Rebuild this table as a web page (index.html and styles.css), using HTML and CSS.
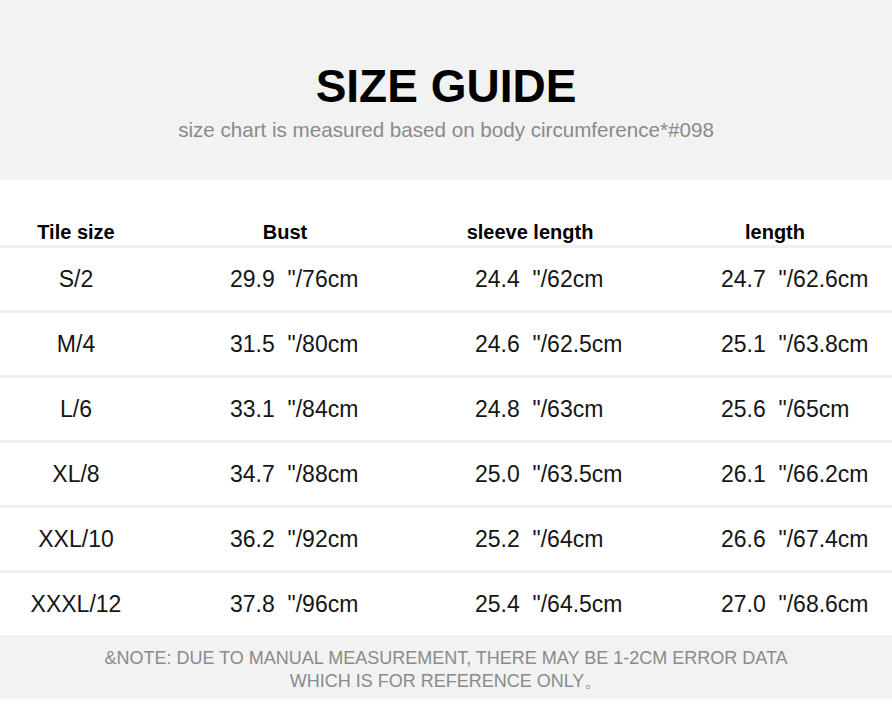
FILE: index.html
```html
<!DOCTYPE html>
<html lang="en">
<head>
<meta charset="utf-8">
<title>Size Guide</title>
<link rel="stylesheet" href="styles.css">
</head>
<body>
<header class="hero">
  <h1 class="title">SIZE GUIDE</h1>
  <p class="subtitle">size chart is measured based on body circumference*#098</p>
</header>
<section class="chart">
  <div class="row head">
    <div class="c c1">Tile size</div>
    <div class="c c2">Bust</div>
    <div class="c c3">sleeve length</div>
    <div class="c c4">length</div>
  </div>
  <div class="row">
    <div class="c c1">S/2</div>
    <div class="c c2">29.9&nbsp; "/76cm</div>
    <div class="c c3">24.4&nbsp; "/62cm</div>
    <div class="c c4">24.7&nbsp; "/62.6cm</div>
  </div>
  <div class="row">
    <div class="c c1">M/4</div>
    <div class="c c2">31.5&nbsp; "/80cm</div>
    <div class="c c3">24.6&nbsp; "/62.5cm</div>
    <div class="c c4">25.1&nbsp; "/63.8cm</div>
  </div>
  <div class="row">
    <div class="c c1">L/6</div>
    <div class="c c2">33.1&nbsp; "/84cm</div>
    <div class="c c3">24.8&nbsp; "/63cm</div>
    <div class="c c4">25.6&nbsp; "/65cm</div>
  </div>
  <div class="row">
    <div class="c c1">XL/8</div>
    <div class="c c2">34.7&nbsp; "/88cm</div>
    <div class="c c3">25.0&nbsp; "/63.5cm</div>
    <div class="c c4">26.1&nbsp; "/66.2cm</div>
  </div>
  <div class="row">
    <div class="c c1">XXL/10</div>
    <div class="c c2">36.2&nbsp; "/92cm</div>
    <div class="c c3">25.2&nbsp; "/64cm</div>
    <div class="c c4">26.6&nbsp; "/67.4cm</div>
  </div>
  <div class="row last">
    <div class="c c1">XXXL/12</div>
    <div class="c c2">37.8&nbsp; "/96cm</div>
    <div class="c c3">25.4&nbsp; "/64.5cm</div>
    <div class="c c4">27.0&nbsp; "/68.6cm</div>
  </div>
</section>
<footer class="note">
  <p>&amp;NOTE: DUE TO MANUAL MEASUREMENT, THERE MAY BE 1-2CM ERROR DATA<br>WHICH IS FOR REFERENCE ONLY。</p>
</footer>
</body>
</html>
```
FILE: styles.css
```css
html, body {
  margin: 0;
  padding: 0;
  background: #ffffff;
}
body {
  font-family: "Liberation Sans", Arial, sans-serif;
  color: #111111;
  width: 892px;
}
.hero {
  background: #f2f2f2;
  height: 180px;
  box-sizing: border-box;
  padding-top: 63px;
  text-align: center;
}
.title {
  margin: 0;
  font-size: 46px;
  line-height: 46px;
  font-weight: bold;
  color: #000;
}
.subtitle {
  margin: 11px 0 0;
  font-size: 20.6px;
  line-height: 20px;
  color: #8a8a8a;
}
.chart {
  display: flex;
  flex-direction: column;
}
.row {
  display: grid;
  grid-template-columns: 152px 266px 240px 234px;
  border-bottom: 3px solid #f0f0f0;
  box-sizing: border-box;
  height: 65px;
  padding-top: 20px;
  font-size: 23px;
  line-height: 23px;
  color: #151515;
}
.row.last {
  border-bottom: none;
  height: 62px;
}
.row.head {
  height: 68px;
  padding-top: 42px;
  font-size: 20px;
  line-height: 20px;
  font-weight: bold;
  color: #000;
}
.c {
  text-align: center;
  white-space: nowrap;
}
.row:not(.head) .c2,
.row:not(.head) .c3,
.row:not(.head) .c4 {
  text-align: left;
}
.row:not(.head) .c2 { padding-left: 78px; }
.row:not(.head) .c3 { padding-left: 57px; }
.row:not(.head) .c4 { padding-left: 63px; }
.row.head .c3 { padding-right: 16px; }
.note {
  background: #f2f2f2;
  height: 64px;
  box-sizing: border-box;
  padding-top: 12px;
  text-align: center;
}
.note p {
  margin: 0;
  font-size: 18px;
  line-height: 23px;
  color: #8a8a8a;
}
```
